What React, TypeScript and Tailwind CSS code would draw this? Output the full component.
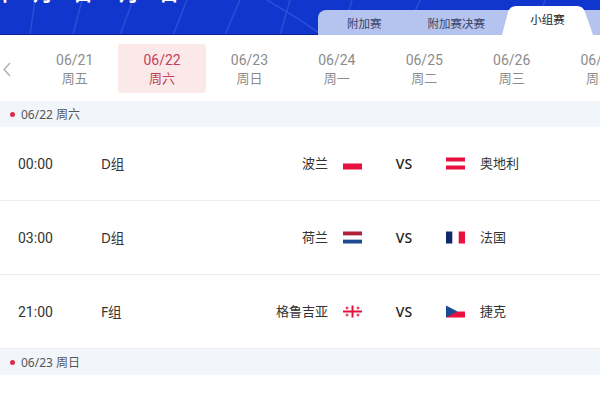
type Flag = "pl" | "at" | "nl" | "fr" | "ge" | "cz";

function FlagIcon({ code }: { code: Flag }) {
  return (
    <svg width="19" height="13" viewBox="0 0 19 13" className="block shrink-0">
      {code === "pl" && <rect y="6.5" width="19" height="6" fill="#e8103c" />}
      {code === "at" && (
        <>
          <rect y="0.5" width="19" height="4" fill="#e8103c" />
          <rect y="8.5" width="19" height="4" fill="#e8103c" />
        </>
      )}
      {code === "nl" && (
        <>
          <rect y="0.5" width="19" height="4" fill="#b51e38" />
          <rect y="8.5" width="19" height="4" fill="#1f4a8f" />
          <rect y="4.5" width="19" height="0.6" fill="#d9d9e2" />
          <rect y="7.9" width="19" height="0.6" fill="#d9d9e2" />
        </>
      )}
      {code === "fr" && (
        <>
          <rect y="0.5" width="6.3" height="12" fill="#0f2a66" />
          <rect x="12.7" y="0.5" width="6.3" height="12" fill="#e8103c" />
        </>
      )}
      {code === "ge" && (
        <g fill="#e8103c">
          <rect x="8.5" y="0.5" width="2" height="12" />
          <rect y="5.5" width="19" height="2" />
          <rect x="3.5" y="1.5" width="1" height="3" />
          <rect x="2.5" y="2.5" width="3" height="1" />
          <rect x="14.5" y="1.5" width="1" height="3" />
          <rect x="13.5" y="2.5" width="3" height="1" />
          <rect x="3.5" y="8.5" width="1" height="3" />
          <rect x="2.5" y="9.5" width="3" height="1" />
          <rect x="14.5" y="8.5" width="1" height="3" />
          <rect x="13.5" y="9.5" width="3" height="1" />
        </g>
      )}
      {code === "cz" && (
        <>
          <rect y="6.5" width="19" height="6" fill="#e8103c" />
          <polygon points="0,0.5 11.5,6.5 0,12.5" fill="#1d4a94" />
        </>
      )}
    </svg>
  );
}

const dates = [
  ["06/21", "周五"],
  ["06/22", "周六"],
  ["06/23", "周日"],
  ["06/24", "周一"],
  ["06/25", "周二"],
  ["06/26", "周三"],
  ["06/27", "周四"],
];

const rows: { time: string; group: string; home: string; hf: Flag; away: string; af: Flag }[] = [
  { time: "00:00", group: "D组", home: "波兰", hf: "pl", away: "奥地利", af: "at" },
  { time: "03:00", group: "D组", home: "荷兰", hf: "nl", away: "法国", af: "fr" },
  { time: "21:00", group: "F组", home: "格鲁吉亚", hf: "ge", away: "捷克", af: "cz" },
];

function Section({ label }: { label: string }) {
  return (
    <div className="h-[26px] bg-[#f2f5f9] flex items-center pl-[10px] pt-px text-[12px] text-[#555]">
      <span className="w-[5px] h-[5px] rounded-full bg-[#d9304f] mr-[6px]" />
      {label}
    </div>
  );
}

export default function App() {
  return (
    <div className='w-[600px] h-[400px] overflow-hidden bg-white font-["Noto_Sans","Noto_Sans_CJK_SC",sans-serif]'>
      <div className="relative h-[35px] bg-[#1036cd] overflow-hidden">
        <svg width="600" height="35" viewBox="0 0 600 35" className="absolute inset-0">
          <g stroke="#2b4cd6" strokeWidth="1.6" fill="none">
            <path d="M35 0 L30 35" />
            <path d="M82 0 L73 35" />
            <path d="M133 0 L120 35" />
            <path d="M187 0 L173 35" />
            <path d="M240 0 L225 35" />
            <path d="M290 0 L280 35" />
            <path d="M267 0 L300 20 L322 35" />
            <path d="M352 0 L342 35" />
            <path d="M420 0 L415 12" />
            <path d="M545 0 L542 10" />
          </g>
        </svg>
        <div className="absolute inset-x-0 bottom-0 h-px bg-[#0a229c]" />
        <div className="absolute left-[-5px] top-[-16px] text-white font-bold text-[20px] leading-[20px] flex whitespace-nowrap">
          <span>中</span>
          <span className="ml-[18px]">月</span>
          <span className="ml-[20px]">日</span>
          <span className="ml-[26px]">月</span>
          <span className="ml-[20px]">日</span>
        </div>
        <div className="absolute left-[318px] right-0 bottom-0 h-[25px] bg-[#b5c3ef] rounded-tl-[8px] flex items-center pt-[3px] text-[11.5px] text-[#3a4468]">
          <span className="ml-[29px]">附加赛</span>
          <span className="ml-[46px]">附加赛决赛</span>
        </div>
        <div className="absolute left-[502px] bottom-0 w-[91px] h-[29px] flex items-center justify-center text-[11.5px] text-[#222] pb-[2px]">
          <svg width="91" height="29" viewBox="0 0 91 29" className="absolute inset-0">
            <path d="M0 29 L6 6 Q8 0 14 0 L75 0 Q81 0 83 6 L91 29 Z" fill="#fff" />
          </svg>
          <span className="relative">小组赛</span>
        </div>
      </div>

      <div className="relative h-[66px] bg-white flex items-center pl-[31px] overflow-hidden">
        <svg width="8" height="15" viewBox="0 0 8 15" className="absolute left-[3px] top-[27px]">
          <path d="M7 1 L1 7.5 L7 14" stroke="#aaa" strokeWidth="1.2" fill="none" />
        </svg>
        {dates.map(([d, w], i) => (
          <div
            key={d}
            className={
              i === 1
                ? "shrink-0 w-[87.4px] h-[49px] pt-[2px] rounded-[3px] bg-[#fbe9e9] text-[#c4405a] flex flex-col items-center justify-center leading-[18px]"
                : "shrink-0 w-[87.4px] h-[49px] pt-[2px] text-[#8c8c8c] flex flex-col items-center justify-center leading-[18px]"
            }
          >
            <span className='text-[14px] font-["Roboto",sans-serif]'>{d}</span>
            <span className="text-[13px]">{w}</span>
          </div>
        ))}
      </div>

      <Section label="06/22 周六" />
      {rows.map((r) => (
        <div key={r.time} className="h-[74px] border-b border-[#ececec] flex items-center text-[13px] text-[#333]">
          <span className='w-[101px] pl-[18px] pt-[2px] text-[14px] font-["Roboto",sans-serif]'>{r.time}</span>
          <span className="w-[100px] pt-px text-[13.5px]">{r.group}</span>
          <span className="w-[127px] pt-px text-right">{r.home}</span>
          <span className="ml-[15px]"><FlagIcon code={r.hf} /></span>
          <span className="w-[84px] text-center text-[14px] font-medium text-[#222]">VS</span>
          <FlagIcon code={r.af} />
          <span className="ml-[15px] pt-px">{r.away}</span>
        </div>
      ))}
      <Section label="06/23 周日" />
    </div>
  );
}
